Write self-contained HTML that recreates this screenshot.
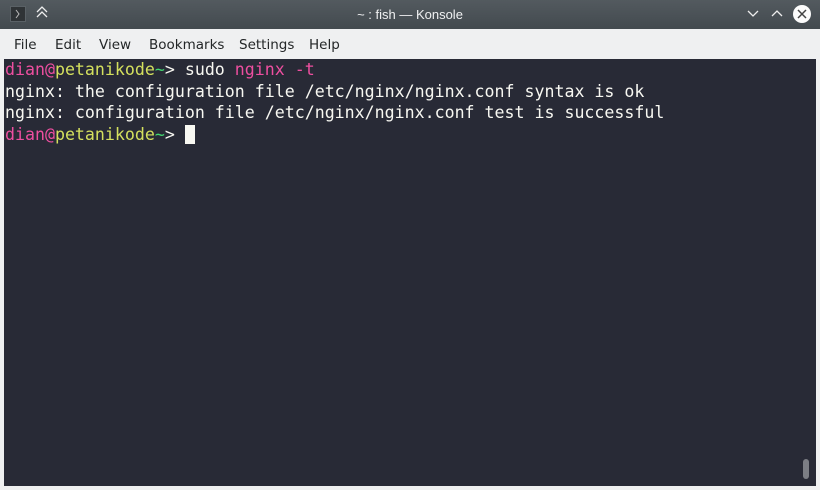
<!DOCTYPE html><html><head><style>
body{margin:0;width:820px;height:490px;background:#eff0f1;position:relative;overflow:hidden;font-family:"Liberation Sans","DejaVu Sans",sans-serif}
#title{position:absolute;left:0;top:0;width:820px;height:29px;background:linear-gradient(#535a5f,#434a4f);color:#eff0f1;font-size:13px;text-align:center;line-height:29px}
#menu{position:absolute;top:29px;left:0;width:820px;height:30px;font-size:13.5px;color:#232627;font-family:"DejaVu Sans",sans-serif}
#menu span{position:absolute;top:8px}
#term{position:absolute;left:4px;top:59px;width:812px;height:427px;background:#282a36;font-family:"DejaVu Sans Mono",monospace;font-size:16.6px;line-height:21.5px;color:#f8f8f2;white-space:pre;padding-left:1px;box-sizing:border-box}
.p{color:#ee4fa0}.y{color:#d4e05e}.g{color:#43d870}
</style></head><body>
<div id="title">~ : fish — Konsole
<div style="position:absolute;left:10px;top:6px;width:16px;height:16px;background:#2f3336;border:1px solid #5a6166;box-sizing:border-box"></div>
<svg style="position:absolute;left:0;top:0" width="820" height="29"><path d="M16 10l3 4-3 4" stroke="#bbb" fill="none"/>
<path d="M37 12l5-5 5 5M37 17l5-5 5 5" stroke="#eee" fill="none" stroke-width="1.3"/>
<path d="M748 11l5 5 5-5" stroke="#eee" fill="none" stroke-width="1.3"/>
<path d="M772 16l5-5 5 5" stroke="#eee" fill="none" stroke-width="1.3"/>
<circle cx="802" cy="14" r="9" fill="#fcfcfc"/><path d="M798 10l8 8M806 10l-8 8" stroke="#444" stroke-width="1.5"/></svg></div>
<div id="menu"><span style="left:14px">File</span><span style="left:55px">Edit</span><span style="left:99px">View</span><span style="left:149px">Bookmarks</span><span style="left:239px">Settings</span><span style="left:309px">Help</span></div>
<div id="term"><span class="p">dian@</span><span class="y">petanikode</span><span class="g">~</span>&gt; sudo <span class="p">nginx -t</span>
nginx: the configuration file /etc/nginx/nginx.conf syntax is ok
nginx: configuration file /etc/nginx/nginx.conf test is successful
<span class="p">dian@</span><span class="y">petanikode</span><span class="g">~</span>&gt; <span style="display:inline-block;width:10px;height:19px;background:#f8f8f2;vertical-align:-4px"></span>
<div style="position:absolute;left:799px;top:400px;width:6px;height:20px;border-radius:3px;background:#7c7e85"></div></div>
</body></html>
